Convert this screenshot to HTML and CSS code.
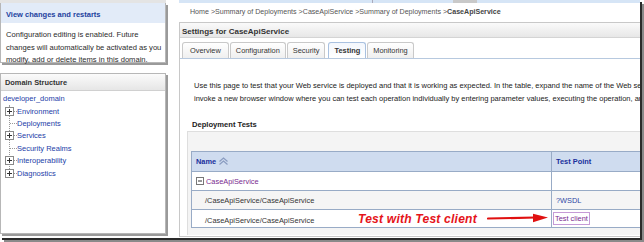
FILE: index.html
```html
<!DOCTYPE html>
<html>
<head>
<meta charset="utf-8">
<link rel="stylesheet" href="styles.css">
</head>
<body>
<div class="shot">
  <div class="left">
    <div class="topgray"></div>
    <div class="box changes">
      <div class="changes-head">View changes and restarts</div>
      <p class="changes-body">Configuration editing is enabled. Future<br>changes will automatically be activated as you<br>modify, add or delete items in this domain.</p>
    </div>
    <div class="box domain">
      <div class="domain-head">Domain Structure</div>
      <div class="tree">
        <div class="root">developer_domain</div>
        <ul class="branch">
          <li><span class="exp"><svg width="7" height="7" viewBox="0 0 7 7"><path d="M1 3.5H6M3.5 1V6" stroke="#333" stroke-width="1"/></svg></span><span class="conn short"></span><span class="node">Environment</span></li>
          <li><span class="pad"></span><span class="conn"></span><span class="node">Deployments</span></li>
          <li><span class="exp"><svg width="7" height="7" viewBox="0 0 7 7"><path d="M1 3.5H6M3.5 1V6" stroke="#333" stroke-width="1"/></svg></span><span class="conn short"></span><span class="node">Services</span></li>
          <li><span class="pad"></span><span class="conn"></span><span class="node">Security Realms</span></li>
          <li><span class="exp"><svg width="7" height="7" viewBox="0 0 7 7"><path d="M1 3.5H6M3.5 1V6" stroke="#333" stroke-width="1"/></svg></span><span class="conn short"></span><span class="node">Interoperability</span></li>
          <li class="last"><span class="exp"><svg width="7" height="7" viewBox="0 0 7 7"><path d="M1 3.5H6M3.5 1V6" stroke="#333" stroke-width="1"/></svg></span><span class="conn short"></span><span class="node">Diagnostics</span></li>
        </ul>
      </div>
    </div>
  </div>
  <div class="main">
    <div class="topstrip"><span class="strip-btn a"></span><span class="strip-btn b"></span></div>
    <div class="crumbs">Home &gt;Summary of Deployments &gt;CaseApiService &gt;Summary of Deployments &gt;<b>CaseApiService</b></div>
    <div class="settings">
      <div class="settings-head">Settings for CaseApiService</div>
      <div class="tabs">
        <span class="tab first">Overview</span>
        <span class="tab">Configuration</span>
        <span class="tab">Security</span>
        <span class="tab active">Testing</span>
        <span class="tab">Monitoring</span>
      </div>
      <div class="content">
        <p class="intro">Use this page to test that your Web service is deployed and that it is working as expected. In the table, expand the name of the Web service to see the test points.<br>invoke a new browser window where you can test each operation individually by entering parameter values, executing the operation, and viewing the results.</p>
        <h3 class="section-title">Deployment Tests</h3>
        <div class="tests">
          <table class="grid">
            <tr class="head">
              <th class="c-name">Name <svg class="sort" width="11" height="8" viewBox="0 0 11 8"><path d="M1.5 4.5L5.5 1L9.5 4.5M1.5 7.5L5.5 4L9.5 7.5" fill="none" stroke="#8a9cc0" stroke-width="1.2"/></svg></th>
              <th class="c-point">Test Point</th>
            </tr>
            <tr class="r1">
              <td class="c-name"><span class="minus"><svg width="8" height="8" viewBox="0 0 8 8"><rect x="0.5" y="0.5" width="7" height="7" fill="#fff" stroke="#777"/><path d="M2 4H6" stroke="#333"/></svg></span><span class="svc">CaseApiService</span></td>
              <td class="c-point"></td>
            </tr>
            <tr class="r2">
              <td class="c-name"><span class="path">/CaseApiService/CaseApiService</span></td>
              <td class="c-point"><span class="wsdl">?WSDL</span></td>
            </tr>
            <tr class="r3">
              <td class="c-name"><span class="path fixed">/CaseApiService/CaseApiService</span><span class="note">Test with Test client</span><svg class="arrow" width="62" height="10" viewBox="0 0 62 10"><path d="M1 5.5L48 4.5" stroke="#e01010" stroke-width="2.2" stroke-linecap="round"/><path d="M46 0.8L61 4.6L46 9.2Z" fill="#e01010"/></svg></td>
              <td class="c-point"><span class="client">Test client</span></td>
            </tr>
          </table>
        </div>
      </div>
    </div>
  </div>
</div>
</body>
</html>
```

FILE: styles.css
```css
* { box-sizing: border-box; }
html, body { margin: 0; padding: 0; background: #fff; }
body {
  width: 644px;
  height: 242px;
  overflow: hidden;
  font-family: "Liberation Sans", Arial, sans-serif;
  font-size: 7.4px;
  color: #333;
}
.shot {
  width: 640px;
  height: 238px;
  background: #fff;
  display: flex;
  overflow: hidden;
  box-shadow: 2px 2px 0 #2b2b2b, 4px 4px 0 #8a8a8a;
}
.left {
  width: 168px;
  flex: none;
  display: flex;
  flex-direction: column;
}
.topgray { height: 3px; background: #e4e4e4; margin-right: 2px; }
.box {
  width: 166px;
  border: 1px solid #b7b7b7;
  background: #fff;
  box-shadow: 2px 2px 0 #9a9a9a;
}
.changes { border-top: none; height: 60px; }
.changes-head {
  height: 20px;
  background: #e2ebf8;
  color: #1d3f9e;
  font-weight: bold;
  font-size: 7.5px;
  padding: 7px 0 0 5px;
}
.changes-body {
  margin: 0;
  padding: 6px 0 0 5px;
  line-height: 12.5px;
  font-size: 7.6px;
  color: #2a2a2a;
  white-space: nowrap;
}
.domain { margin-top: 10px; height: 161px; }
.domain-head {
  height: 17px;
  background: linear-gradient(#fbfbfb, #e6e6e6);
  border-bottom: 1px solid #d0d0d0;
  color: #333;
  font-weight: bold;
  font-size: 7.4px;
  padding: 4px 0 0 4px;
}
.tree { padding: 2px 0 0 2px; color: #2440a8; font-size: 7.5px; }
.root { height: 12px; line-height: 12px; }
.branch {
  list-style: none;
  margin: 0 0 0 6px;
  padding: 0;
  border-left: 1px dotted #999;
}
.branch li {
  height: 12.4px;
  display: flex;
  align-items: center;
  margin-left: -5px;
}
.branch li.last { background: linear-gradient(to bottom, transparent 50%, #fff 50%) no-repeat 0 0 / 9px 100%; }
.exp {
  width: 9px; height: 9px;
  border: 1px solid #8a8a8a;
  background: #fff;
  display: flex; align-items: center; justify-content: center;
  position: relative; z-index: 1;
}
.exp svg { display: block; }
.pad { width: 5px; }
.conn { width: 7px; border-top: 1px dotted #999; }
.conn.short { width: 3px; }
.node { padding-left: 0; }

.main {
  flex: none;
  width: 560px;
  margin-left: 11px;
  display: flex;
  flex-direction: column;
}
.topstrip {
  height: 3px;
  background: #d6e5f6;
  display: flex;
}
.strip-btn { height: 3px; background: #c9c9c9; }
.strip-btn.a { width: 1px; margin-left: 193px; background: #aab; }
.strip-btn.b { width: 24px; margin-left: 80px; }
.crumbs {
  height: 19px;
  padding: 5px 0 0 11px;
  font-size: 7.1px;
  color: #555;
  white-space: nowrap;
}
.crumbs b { color: #444; }
.settings {
  border: 1px solid #c8c8c8;
  border-right: none;
  height: 215px;
}
.settings-head {
  height: 15px;
  background: linear-gradient(#fafafa, #e7e7e7);
  border-bottom: 1px solid #d4d4d4;
  font-weight: bold;
  font-size: 8px;
  color: #333;
  padding: 4px 0 0 2px;
}
.tabs {
  height: 21px;
  display: flex;
  align-items: flex-end;
  gap: 1px;
  padding-left: 2px;
  border-bottom: 1px solid #b7c9df;
}
.tab {
  height: 16px;
  padding: 0 5px;
  border: 1px solid #c9c9c9;
  border-bottom: none;
  border-radius: 3px 3px 0 0;
  background: linear-gradient(#ffffff, #efefef);
  font-size: 7.4px;
  color: #333;
  line-height: 16px;
}
.tab.first { padding: 0 7px; }
.tab.active {
  font-weight: bold;
  margin-left: 2px;
  background: linear-gradient(#f3f7fd, #ffffff);
  border-color: #a9c1e0;
}
.content { padding: 20px 0 0 0; }
.intro {
  margin: 0 0 0 14px;
  font-size: 7.5px;
  line-height: 13px;
  color: #222;
  white-space: nowrap;
}
.section-title {
  margin: 14px 0 0 12px;
  font-size: 7.6px;
  line-height: 11px;
  color: #222;
}
.tests {
  margin: 1px 0 0 7px;
  height: 104px;
  background: #f4f4f4;
  border-top: 1px solid #dedede;
  border-left: 1px solid #dedede;
  padding: 19px 0 0 3px;
}
.grid {
  border-collapse: collapse;
  width: 560px;
  font-size: 7.4px;
  table-layout: fixed;
}
.grid th, .grid td {
  border: 1px solid #98abc6;
  text-align: left;
  padding: 0 0 0 4px;
  white-space: nowrap;
}
.grid .c-name { width: 360px; }
.grid tr.head { height: 20px; background: #cfdcef; }
.grid th { color: #1a2f9c; font-weight: bold; }
.sort { vertical-align: -1px; }
.grid tr.r1 { height: 19px; background: #fff; }
.grid tr.r2 { height: 19px; background: #f5f5f5; }
.grid tr.r3 { height: 18px; background: #fff; }
.minus { display: inline-block; vertical-align: -1px; margin-right: 2px; }
.minus svg { display: block; }
.svc { color: #7a2a8f; }
.path { margin-left: 9px; color: #333; }
.path.fixed { display: inline-block; width: 153px; }
.note {
  color: #e5141a;
  font-weight: bold;
  font-style: italic;
  font-size: 12.1px;
  letter-spacing: 0.2px;
}
.arrow { margin-left: 10px; vertical-align: 0; }
.wsdl { color: #2c46a4; }
.client {
  color: #7a2a8f;
  border: 1px solid #c59bd6;
  padding: 1px 1px;
  margin-left: -3px;
}
```
